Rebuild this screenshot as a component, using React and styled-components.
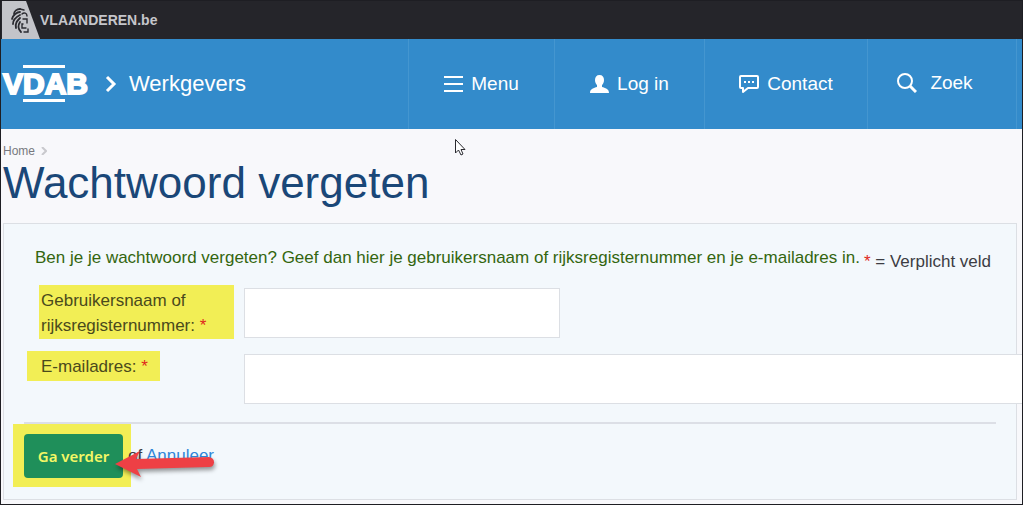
import React, { useState } from "react";
import styled, { createGlobalStyle } from "styled-components";

const App = () => {
 const [username, setUsername] = useState("");
 const [email, setEmail] = useState("");

 return (
  <Page>
   <GlobalStyle />
   <TopBar>
    <Lion href="#vlaanderen" aria-label="Vlaanderen">
     <svg width="38" height="38" viewBox="0 0 38 38">
      <path d="M0 0H24L38 38H0Z" fill="#c3c4c9" />
      <g fill="none" stroke="#2b2b31" strokeWidth="1.8" strokeLinecap="round">
       <path d="M18 8C15 8 12 10 12 13M18 11C15 11 11 14 10 18M18 14C14 16 11 18 11 23M18 17C15 20 13 22 14 27M18 21C16 24 16 28 19 31" />
       <path d="M18 8L22 9M20 13C22 11 25 12 25 15M21 18H25V22M21 23H20V27H24M22 31H26V28" strokeWidth="1.4" />
      </g>
     </svg>
    </Lion>
    <TopLink href="#vlaanderen">VLAANDEREN.be</TopLink>
   </TopBar>

   <Header>
    <Brand href="#home">
     <svg width="84" height="40" viewBox="0 0 84 40" aria-label="VDAB">
      <rect x="20" y="1" width="42" height="3" fill="#fff" />
      <text x="0" y="30" fill="#fff" stroke="#fff" strokeWidth="2">VDAB</text>
      <rect x="20" y="35" width="42" height="3" fill="#fff" />
     </svg>
     <svg width="12" height="20" viewBox="0 0 12 20">
      <path d="M2 3L9 10L2 17" fill="none" stroke="#fff" strokeWidth="3" />
     </svg>
     <span>Werkgevers</span>
    </Brand>
    <Nav>
     <NavItem $width={146}>
      <svg width="19" height="18" viewBox="0 0 19 18">
       <path d="M0 2H19M0 9H19M0 16H19" stroke="#fff" strokeWidth="2" />
      </svg>
      Menu
     </NavItem>
     <NavItem $width={150}>
      <svg width="19" height="18" viewBox="0 0 19 18">
       <path
        d="M9.500 0C12.500 0 14 2 14 5C14 7.500 13 9 12 10V12C15 13 19 13.500 19 18H0C0 13.500 4 13 7 12V10C6 9 5 7.500 5 5C5 2 6.500 0 9.500 0Z"
        fill="#fff"
       />
      </svg>
      Log in
     </NavItem>
     <NavItem $width={163}>
      <svg width="20" height="18" viewBox="0 0 20 18">
       <path d="M2 1H18Q19 1 19 2V12Q19 13 18 13H9L4 17V13H2Q1 13 1 12V2Q1 1 2 1Z" fill="none" stroke="#fff" strokeWidth="2" strokeLinejoin="round" />
       <path d="M5 6H7V8H5ZM9 6H11V8H9ZM13 6H15V8H13Z" fill="#fff" />
      </svg>
      Contact
     </NavItem>
     <SearchItem $width={149} $gap={13}>
      <svg width="20" height="20" viewBox="0 0 20 20">
       <circle cx="8" cy="8" r="7" fill="none" stroke="#fff" strokeWidth="2" />
       <path d="M13 13L19 19" stroke="#fff" strokeWidth="3" />
      </svg>
      Zoek
     </SearchItem>
    </Nav>
   </Header>

   <Main>
    <Breadcrumb>
     <a href="#home">Home</a>
     <svg width="6" height="8" viewBox="0 0 6 8">
      <path d="M1 0L5 4L1 8" fill="none" stroke="#c9c9cd" strokeWidth="2" />
     </svg>
    </Breadcrumb>
    <Title>Wachtwoord vergeten</Title>

    <Panel onSubmit={(e) => e.preventDefault()}>
     <Intro>
      <p>
       Ben je je wachtwoord vergeten? Geef dan hier je gebruikersnaam of rijksregisternummer en je e-mailadres in.
      </p>
      <Legend>
       <Star>*</Star> = Verplicht veld
      </Legend>
     </Intro>

     <Field>
      <WideLabel htmlFor="username">
       Gebruikersnaam of rijksregisternummer: <Star>*</Star>
      </WideLabel>
      <ShortInput
       id="username"
       value={username}
       onChange={(e) => setUsername(e.target.value)}
      />
     </Field>
     <Field $bleed>
      <Label htmlFor="email">
       E-mailadres: <Star>*</Star>
      </Label>
      <Input
       id="email"
       type="email"
       value={email}
       onChange={(e) => setEmail(e.target.value)}
      />
     </Field>

     <Actions>
      <Marked>
       <Submit type="submit">Ga verder</Submit>
      </Marked>
      <Cancel>
       of <a href="#annuleer">Annuleer</a>
      </Cancel>
      <Arrow width="104" height="32" viewBox="0 0 104 32">
       <path
        d="M0 15L25 2L21 10L94 8Q99 9 99 13Q99 18 94 18L22 20L26 28Z"
        fill="#ee4045"
       />
      </Arrow>
     </Actions>
    </Panel>
   </Main>

   <Pointer width="11" height="17" viewBox="0 0 11 17">
    <path
     d="M.5 .5V14L3.500 11L6 16L8 15L6 10.500H10Z"
     fill="#fff"
     stroke="#2a2a30"
    />
   </Pointer>
  </Page>
 );
};

const GlobalStyle = createGlobalStyle`
 *{
  box-sizing: border-box;
 }
 body{
  margin: 0;
  font-family: "Liberation Sans", Arial, sans-serif;
  font-size: 17px;
  color: #3c3d43;
 }
 p, h1{
  margin: 0;
 }
 svg{
  flex: none;
 }
`;

const Page = styled.div`
 position: relative;
 min-height: 100vh;
 overflow: hidden;
 border: 1px solid #1e1e23;
 background: #f8f8fb;
`;

const TopBar = styled.div`
 display: flex;
 align-items: center;
 height: 38px;
 padding-left: 1px;
 background: #25252a;
`;

const Lion = styled.a`
 display: flex;
`;

const TopLink = styled.a`
 color: #c5c6cb;
 font-size: 14px;
 font-weight: bold;
 text-decoration: none;
`;

const Header = styled.header`
 display: flex;
 justify-content: space-between;
 height: 90px;
 padding-right: 5px;
 background: #338bcb;
`;

const Brand = styled.a`
 display: flex;
 align-items: center;
 padding-left: 2px;
 color: white;
 font-size: 22px;
 text-decoration: none;
 svg{
  overflow: visible;
 }
 text{
  font-size: 30px;
  font-weight: bold;
 }
 span{
  margin-left: 12px;
 }
 svg + svg{
  margin-left: 18px;
 }
`;

const Nav = styled.nav`
 display: flex;
 border-right: 1px solid #4496d0;
`;

const NavItem = styled.button`
 display: flex;
 align-items: center;
 justify-content: center;
 gap: ${(props) => props.$gap || 8}px;
 width: ${(props) => props.$width}px;
 padding: 0;
 border: 0;
 border-left: 1px solid #4496d0;
 background: none;
 color: white;
 font-family: inherit;
 font-size: 19px;
`;

const SearchItem = styled(NavItem)`
 padding: 0 14px 2px 0;
`;

const Main = styled.main`
 padding: 14px 5px 4px 2px;
`;

const Breadcrumb = styled.nav`
 display: flex;
 align-items: center;
 gap: 6px;
 font-size: 12px;
 line-height: 16px;
 a{
  color: #77787e;
  text-decoration: none;
 }
`;

const Title = styled.h1`
 color: #1a4778;
 font-size: 44px;
 font-weight: normal;
 line-height: 48px;
`;

const Panel = styled.form`
 margin-top: 16px;
 padding: 20px 20px 12px;
 border: 1px solid #dcdfe4;
 background: #f3f8fc;
`;

const Intro = styled.div`
 display: flex;
 gap: 4px;
 padding: 3px 0 0 11px;
 line-height: 22px;
 white-space: nowrap;
 p{
  color: #33660f;
 }
`;

const Legend = styled.span`
 padding-top: 4px;
`;

const Star = styled.span`
 color: #e0281c;
`;

const Field = styled.div`
 display: grid;
 grid-template-columns: 220px 1fr;
 align-items: start;
 margin-top: 12px;
 margin-right: ${(props) => (props.$bleed ? "-28px" : "0")};
`;

const Label = styled.label`
 justify-self: start;
 margin-left: 3px;
 padding: 3px 12px 2px 14px;
 background: #f2ee55;
 color: #4a4a1c;
 line-height: 25px;
`;

const WideLabel = styled(Label)`
 width: 195px;
 margin-left: 15px;
 padding: 3px 2px 1px;
`;

const Input = styled.input`
 width: 100%;
 height: 50px;
 margin-top: 3px;
 padding: 0 12px;
 border: 1px solid #dcdfe4;
 background: white;
 font: inherit;
`;

const ShortInput = styled(Input)`
 width: 316px;
`;

const Actions = styled.div`
 position: relative;
 display: flex;
 align-items: center;
 margin-top: 18px;
 border-top: 2px solid #dcdfe6;
`;

const Marked = styled.div`
 margin-left: -11px;
 padding: 10px 8px 9px 11px;
 background: #f2ee55;
`;

const Submit = styled.button`
 display: block;
 width: 99px;
 height: 44px;
 padding: 0;
 border: 0;
 border-radius: 4px;
 background: #1f8f5a;
 color: #f4f765;
 font-family: "Noto Sans", sans-serif;
 font-size: 15px;
 font-weight: 600;
`;

const Cancel = styled.span`
 margin-left: -3px;
 a{
  color: #2f86d8;
 }
`;

const Arrow = styled.svg`
 position: absolute;
 top: 25px;
 left: 91px;
 filter: drop-shadow(1px 3px 2px rgba(0, 0, 0, .4));
`;

const Pointer = styled.svg`
 position: absolute;
 top: 138px;
 left: 454px;
`;

export default App;
